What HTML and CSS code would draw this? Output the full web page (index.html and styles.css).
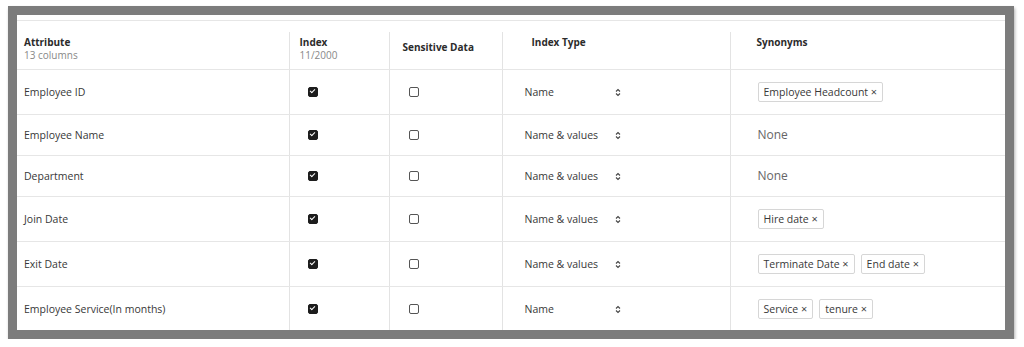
FILE: index.html
```html
<!DOCTYPE html>
<html lang="en">
<head>
    <meta charset="UTF-8">
    <meta name="viewport" content="width=device-width, initial-scale=1.0">
    <title>Attributes</title>
    <link rel="stylesheet" href="styles.css">
</head>
<body>

<div class="frame">
    <div class="panel">
        <table class="attr-table">
            <colgroup>
                <col class="c-attr">
                <col class="c-index">
                <col class="c-sens">
                <col class="c-type">
                <col class="c-syn">
            </colgroup>
            <thead>
                <tr>
                    <th class="h-attr">Attribute<span class="sub">13 columns</span></th>
                    <th class="h-index">Index<span class="sub">11/2000</span></th>
                    <th class="h-sens">Sensitive Data</th>
                    <th class="h-type">Index Type</th>
                    <th class="h-syn">Synonyms</th>
                </tr>
            </thead>
            <tbody>
                <tr>
                    <td class="attr">Employee ID</td>
                    <td class="idx"><span class="check on"></span></td>
                    <td class="sens"><span class="check"></span></td>
                    <td class="type"><div class="select"><span>Name</span><svg width="6" height="9" viewBox="0 0 6 9"><path d="M1 3.5 3 1.5 5 3.5M1 5.5 3 7.5 5 5.5" fill="none" stroke="#444" stroke-width="1.1"/></svg></div></td>
                    <td class="syn"><span class="chip">Employee Headcount <span class="x">×</span></span></td>
                </tr>
                <tr>
                    <td class="attr">Employee Name</td>
                    <td class="idx"><span class="check on"></span></td>
                    <td class="sens"><span class="check"></span></td>
                    <td class="type"><div class="select"><span>Name &amp; values</span><svg width="6" height="9" viewBox="0 0 6 9"><path d="M1 3.5 3 1.5 5 3.5M1 5.5 3 7.5 5 5.5" fill="none" stroke="#444" stroke-width="1.1"/></svg></div></td>
                    <td class="syn"><span class="none">None</span></td>
                </tr>
                <tr>
                    <td class="attr">Department</td>
                    <td class="idx"><span class="check on"></span></td>
                    <td class="sens"><span class="check"></span></td>
                    <td class="type"><div class="select"><span>Name &amp; values</span><svg width="6" height="9" viewBox="0 0 6 9"><path d="M1 3.5 3 1.5 5 3.5M1 5.5 3 7.5 5 5.5" fill="none" stroke="#444" stroke-width="1.1"/></svg></div></td>
                    <td class="syn"><span class="none">None</span></td>
                </tr>
                <tr>
                    <td class="attr">Join Date</td>
                    <td class="idx"><span class="check on"></span></td>
                    <td class="sens"><span class="check"></span></td>
                    <td class="type"><div class="select"><span>Name &amp; values</span><svg width="6" height="9" viewBox="0 0 6 9"><path d="M1 3.5 3 1.5 5 3.5M1 5.5 3 7.5 5 5.5" fill="none" stroke="#444" stroke-width="1.1"/></svg></div></td>
                    <td class="syn"><span class="chip">Hire date <span class="x">×</span></span></td>
                </tr>
                <tr>
                    <td class="attr">Exit Date</td>
                    <td class="idx"><span class="check on"></span></td>
                    <td class="sens"><span class="check"></span></td>
                    <td class="type"><div class="select"><span>Name &amp; values</span><svg width="6" height="9" viewBox="0 0 6 9"><path d="M1 3.5 3 1.5 5 3.5M1 5.5 3 7.5 5 5.5" fill="none" stroke="#444" stroke-width="1.1"/></svg></div></td>
                    <td class="syn"><span class="chip">Terminate Date <span class="x">×</span></span><span class="chip">End date <span class="x">×</span></span></td>
                </tr>
                <tr>
                    <td class="attr">Employee Service(In months)</td>
                    <td class="idx"><span class="check on"></span></td>
                    <td class="sens"><span class="check"></span></td>
                    <td class="type"><div class="select"><span>Name</span><svg width="6" height="9" viewBox="0 0 6 9"><path d="M1 3.5 3 1.5 5 3.5M1 5.5 3 7.5 5 5.5" fill="none" stroke="#444" stroke-width="1.1"/></svg></div></td>
                    <td class="syn"><span class="chip">Service <span class="x">×</span></span><span class="chip">tenure <span class="x">×</span></span></td>
                </tr>
            </tbody>
        </table>
    </div>
</div>

</body>
</html>
```

FILE: styles.css
```css
body {
    font-family: 'Open Sans', sans-serif;
    background-color: #fff;
    color: #383838;
    margin: 0;
    padding: 0;
}
.frame {
    margin: 6px 0 0 8px;
    width: 1006px;
    height: 333px;
    box-sizing: border-box;
    border: 9px solid #7c7c7c;
    background-color: #fff;
    box-shadow: 1px 2px 3px rgba(0, 0, 0, 0.3);
    overflow: hidden;
}
.panel {
    margin-top: 5px;
    padding-top: 11px;
    border-top: 1px solid #e6e6e6;
}
.attr-table {
    width: 100%;
    border-collapse: collapse;
    table-layout: fixed;
}
.c-attr { width: 272px; }
.c-index { width: 100px; }
.c-sens { width: 113px; }
.c-type { width: 228px; }
.c-syn { width: 275px; }
th, td {
    border-left: 1px solid #e3e3e3;
    border-bottom: 1px solid #e6e6e6;
    text-align: left;
}
th:first-child, td:first-child {
    border-left: none;
}
tbody tr:last-child td {
    border-bottom: none;
}
th {
    vertical-align: top;
    font-size: 10px;
    font-weight: 700;
    line-height: 13px;
    color: #2b2b2b;
    padding: 4px 10px 7px;
}
th .sub {
    display: block;
    font-weight: 400;
    color: #888;
}
.h-attr { padding-left: 7px; }
.h-sens { padding-top: 9px; padding-left: 13px; }
.h-type { padding-left: 29px; }
.h-syn { padding-left: 26px; }
td {
    vertical-align: middle;
    font-size: 10.5px;
    line-height: 16px;
    padding: 12px 10px;
}
td.attr { padding-left: 7px; }
td.idx { padding-left: 18px; }
td.sens { padding-left: 19px; }
td.type { padding-left: 22px; }
td.syn { padding-left: 27px; }
.check {
    display: inline-block;
    width: 10px;
    height: 10px;
    box-sizing: border-box;
    border: 1.5px solid #555;
    border-radius: 2px;
    vertical-align: middle;
    margin-bottom: 3px;
}
.check.on {
    background-color: #1d1d1d;
    border-color: #1d1d1d;
    position: relative;
}
.check.on::after {
    content: '';
    position: absolute;
    left: 2px;
    top: 0.5px;
    width: 2px;
    height: 4px;
    border: solid #fff;
    border-width: 0 1px 1px 0;
    transform: rotate(45deg);
}
.select {
    display: flex;
    align-items: center;
    justify-content: space-between;
    width: 96px;
}
.select svg {
    display: block;
}
.chip {
    display: inline-flex;
    align-items: center;
    height: 20px;
    box-sizing: border-box;
    padding: 0 5px;
    margin-right: 6px;
    border: 1px solid #d6d6d6;
    border-radius: 2px;
    font-size: 10.5px;
    vertical-align: middle;
    white-space: pre;
}
.chip .x {
    font-size: 11px;
    color: #444;
}
.none {
    font-size: 12px;
    color: #666;
}
```
